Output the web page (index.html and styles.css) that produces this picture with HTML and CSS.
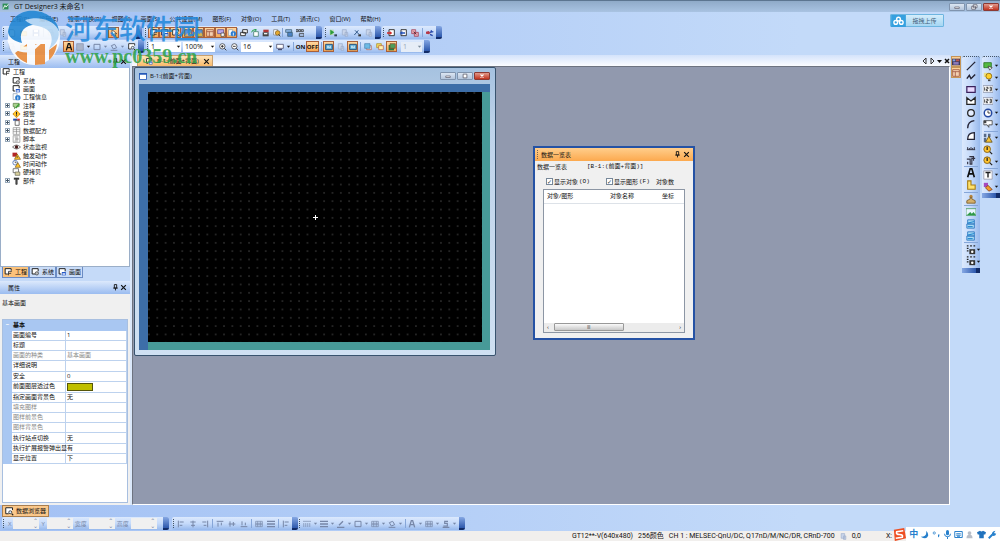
FILE: index.html
```html
<!DOCTYPE html>
<html lang="zh-CN">
<head>
<meta charset="utf-8">
<title>GT Designer3 未命名1</title>
<link rel="stylesheet" href="styles.css">
</head>
<body>
<svg class="defs" aria-hidden="true">
  <symbol id="app" viewBox="0 0 12 12"><path d="M1 1h10v10H1z" fill="#2f8f57"/><path d="M2 10l3-6 2 3 4-5" stroke="#fff" stroke-width="1.5" fill="none"/></symbol>
  <symbol id="arrow" viewBox="0 0 6 6"><path d="M1 2h4L3 4.500z" fill="currentColor"/></symbol>
  <symbol id="close" viewBox="0 0 12 12"><path d="M2 2l8 8M10 2l-8 8" stroke="#111" stroke-width="2"/></symbol>
  <symbol id="pin" viewBox="0 0 12 12"><path d="M4 1h4v6H4zM2 7h8M6 7v4" stroke="#111" stroke-width="1.500" fill="none"/></symbol>
  <symbol id="new" viewBox="0 0 12 12"><path d="M2 1h6l2 2v8H2z" fill="#fff" stroke="#567"/></symbol>
  <symbol id="open" viewBox="0 0 12 12"><path d="M1 3h4l1 1h4v6H1z" fill="#eebf3e" stroke="#a27a1d"/></symbol>
  <symbol id="save" viewBox="0 0 12 12"><path d="M1 1h10v10H1z" fill="#3f6fc0"/><path d="M3 1h6v4H3zM3 7h6v4H3z" fill="#fff"/></symbol>
  <symbol id="cursor" viewBox="0 0 12 12"><path d="M3 1v9l2-2 2 3 1.500-1L7 7h3z" fill="#fff" stroke="#222"/></symbol>
  <symbol id="screen-b" viewBox="0 0 12 12"><path d="M4 9H1V1h9v4" fill="#fff" stroke="#222" stroke-width="1.500"/><path d="M5 6h6v5H5z" fill="#2458c8"/><path d="M6 8h4v2H6z" fill="#fff"/></symbol>
  <symbol id="project" viewBox="0 0 12 12"><path d="M5 9H1V1h9v3" fill="#fff" stroke="#222" stroke-width="1.500"/><path d="M11 5H6v6M6 8h4" fill="none" stroke="#333" stroke-width="1.300"/></symbol>
  <symbol id="system" viewBox="0 0 12 12"><path d="M6 9H1V1h9v4" fill="#fff" stroke="#222" stroke-width="1.500"/><circle cx="8" cy="8" r="2.500" fill="#bbb" stroke="#333"/></symbol>
  <symbol id="find-s" viewBox="0 0 12 12"><path d="M5 9H1V1h9v3" fill="#fff" stroke="#222" stroke-width="1.300"/><circle cx="7" cy="7" r="2" fill="#def" stroke="#222"/><path d="M9 9l2 2" stroke="#222" stroke-width="1.500"/></symbol>
  <symbol id="info" viewBox="0 0 12 12"><path d="M1 1h6v9H1z" fill="#fff" stroke="#89a"/><circle cx="8" cy="7" r="4" fill="#2a7bd0"/><path d="M8 6v4M8 4v1" stroke="#fff" stroke-width="1.300"/></symbol>
  <symbol id="comment" viewBox="0 0 12 12"><path d="M1 2h9v5H6L3 10V7H1z" fill="#a9d18e" stroke="#557a44"/><path d="M5 9l5-6" stroke="#3e9f39" stroke-width="2"/></symbol>
  <symbol id="alarm" viewBox="0 0 12 12"><path d="M6 0l6 6-6 6-6-6z" fill="#c97c10"/><circle cx="6" cy="6" r="4" fill="#ffc42e"/><path d="M6 3v4M6 8v1" stroke="#222" stroke-width="1.500"/></symbol>
  <symbol id="log" viewBox="0 0 12 12"><path d="M1 1h6v3H1z" fill="#234fad"/><path d="M7 1h4v3H7z" fill="#cf3434"/><path d="M4 4h6v7H4z" fill="#fff" stroke="#333"/></symbol>
  <symbol id="recipe" viewBox="0 0 12 12"><path d="M1 1h10v10H1zM6 1v10M1 4h10M1 7h10" fill="#fff" stroke="#888"/></symbol>
  <symbol id="script" viewBox="0 0 12 12"><path d="M1 1h10v10H1z" fill="#fff" stroke="#888"/><path d="M3 3h5M4 5h5M4 7h5M3 9h5" stroke="#777"/></symbol>
  <symbol id="eye" viewBox="0 0 12 12"><path d="M0 6q6-6 12 0-6 6-12 0z" fill="#eee" stroke="#444"/><circle cx="6" cy="6" r="2.500" fill="#4a1a1a"/></symbol>
  <symbol id="trigger" viewBox="0 0 12 12"><path d="M0 1h7v6H0z" fill="#b32626"/><path d="M7 3l5 8H3z" fill="#ffc52d" stroke="#7a5510"/><path d="M7 6v3" stroke="#222"/></symbol>
  <symbol id="time" viewBox="0 0 12 12"><circle cx="4" cy="4" r="3.500" fill="#fff" stroke="#2450a8"/><path d="M4 2v2h2" stroke="#222" fill="none"/><path d="M8 4l4 7H4z" fill="#ffc52d" stroke="#7a5510"/></symbol>
  <symbol id="hardcopy" viewBox="0 0 12 12"><path d="M1 1h8v6H1z" fill="#fff" stroke="#444"/><path d="M4 6h7v5H4z" fill="#d8cf9c" stroke="#665"/></symbol>
  <symbol id="parts" viewBox="0 0 12 12"><path d="M2 1h8v3H2z" fill="#333"/><path d="M5 4h2v7H5z" fill="#666" stroke="#222"/></symbol>
  <symbol id="pic" viewBox="0 0 12 12"><path d="M1 1h10v10H1z" fill="#5a93d8" stroke="#345"/><path d="M1 11l4-5 2 2 2-3 2 3v3z" fill="#d8b24c"/></symbol>
  <symbol id="library" viewBox="0 0 12 12"><path d="M0 1h12v10H0z" fill="#3c3a5c"/><path d="M1 2h4v3H1z" fill="#7fa0e0"/><path d="M6 2h5v3H6z" fill="#c05a50"/><path d="M2 6h8v4H2z" fill="#8a78b8"/></symbol>
  <symbol id="grid" viewBox="0 0 12 12"><path d="M1 1h10v10H1zM1 4h10M5 4v7" fill="#f4d0b0" stroke="#8c3c2c"/></symbol>
  <symbol id="grid-b" viewBox="0 0 12 12"><path d="M1 1h9v6H1z" fill="#b9a8e8" stroke="#4a3d92"/><path d="M6 6h5v5H6z" fill="#fff" stroke="#333"/></symbol>
  <symbol id="cascade" viewBox="0 0 12 12"><path d="M4 1h7v5H4zM1 5h7v5H1z" fill="#fff" stroke="#222" stroke-width="1.300"/></symbol>
  <symbol id="cascade-g" viewBox="0 0 12 12"><path d="M4 4h7v7H4z" fill="#fff" stroke="#2a6d55"/><path d="M1 5q0-4 6-4M5 0l3 1-2 3" stroke="#27a04b" fill="none" stroke-width="1.500"/></symbol>
  <symbol id="stack" viewBox="0 0 12 12"><path d="M2 1h8v4H2z" fill="#b03636"/><path d="M1 5h9v6H1z" fill="#444"/><path d="M3 6h5v2H3z" fill="#eee"/></symbol>
  <symbol id="gold" viewBox="0 0 12 12"><path d="M1 1h6v8H1z" fill="#fff" stroke="#777"/><circle cx="7" cy="6" r="3.500" fill="#e4a931" stroke="#7c581a"/><path d="M8 8l3 3" stroke="#444" stroke-width="1.500"/></symbol>
  <symbol id="dev" viewBox="0 0 12 12"><path d="M1 1h9v4H1z" fill="#8eb8e9" stroke="#356"/><path d="M4 5h7v6H4z" fill="#4c83c6" stroke="#356"/></symbol>
  <symbol id="abc" viewBox="0 0 12 12"><path d="M0 1h3v3H0zM4 1h3v3H4zM8 1h3v3H8zM5 7h7v4H5z" fill="none" stroke="#333" stroke-width="1.200"/></symbol>
  <symbol id="run" viewBox="0 0 12 12"><path d="M1 1h6v8H1z" fill="#b9d7b4"/><path d="M2 1l6 4-6 4z" fill="#2b9b3a"/><path d="M8 8h4v3H8z" fill="#345"/></symbol>
  <symbol id="dim" viewBox="0 0 12 12"><path d="M2 1h6v8H2zM6 5h4v6H6z" fill="#c9d5ea" stroke="#98a9c8"/></symbol>
  <symbol id="tool" viewBox="0 0 12 12"><path d="M2 9l6-7M3 2l6 6" stroke="#345b8c" stroke-width="1.500"/><path d="M8 8h4v3H8z" fill="#333"/></symbol>
  <symbol id="in" viewBox="0 0 12 12"><path d="M3 1h8v9H3z" fill="#fff" stroke="#222" stroke-width="1.300"/><path d="M0 5h4V3l4 3-4 3V7H0z" fill="#d02b2b"/></symbol>
  <symbol id="out" viewBox="0 0 12 12"><path d="M3 1h8v9H3z" fill="#fff" stroke="#222" stroke-width="1.300"/><path d="M1 6l4-3v2h4v2H5v2z" fill="#2653b8"/></symbol>
  <symbol id="verify" viewBox="0 0 12 12"><path d="M1 1h6v6H1zM5 5h6v6H5z" fill="#e7a8b2" stroke="#983248"/><path d="M4 4l4 4" stroke="#222"/></symbol>
  <symbol id="comm" viewBox="0 0 12 12"><path d="M0 4l4-1 3 3-3 2-4-1z" fill="#b43848"/><path d="M6 5l5-1M6 8l4 2M8 2v3" stroke="#2848a8" stroke-width="2"/></symbol>
  <symbol id="font" viewBox="0 0 12 12"><path d="M2 11L5 1h2l3 10M4 7h4" stroke="currentColor" stroke-width="2" fill="none"/></symbol>
  <symbol id="fill" viewBox="0 0 12 12"><path d="M1 1h10v10H1z" fill="#a9b4c8" stroke="#8793ad"/></symbol>
  <symbol id="rect" viewBox="0 0 12 12"><path d="M1.500 2h9v8h-9z" fill="none" stroke="currentColor" stroke-width="1.500"/></symbol>
  <symbol id="bucket" viewBox="0 0 12 12"><path d="M2 4l5-2 3 5-5 2zM1 11h10" stroke="currentColor" stroke-width="1.500" fill="none"/></symbol>
  <symbol id="zoom-in" viewBox="0 0 12 12"><circle cx="5" cy="5" r="4" fill="#fff" stroke="#222"/><path d="M3 5h4M5 3v4M8 8l3 3" stroke="#222" stroke-width="1.300"/></symbol>
  <symbol id="zoom-out" viewBox="0 0 12 12"><circle cx="5" cy="5" r="4" fill="#fff" stroke="#222"/><path d="M3 5h4M8 8l3 3" stroke="#222" stroke-width="1.300"/></symbol>
  <symbol id="monitor" viewBox="0 0 12 12"><path d="M1 2h10v6H1z" fill="#fff" stroke="#335"/><path d="M3 10h6" stroke="#335" stroke-width="1.500"/></symbol>
  <symbol id="dev-b" viewBox="0 0 12 12"><path d="M1 2h10v8H1z" fill="#61b1d8" stroke="#26527e" stroke-width="1.500"/><path d="M3 5h3M7 5h2M3 7h6" stroke="#fff"/></symbol>
  <symbol id="front" viewBox="0 0 12 12"><path d="M4 4h7v6H4z" fill="#eee" stroke="#b45a48"/><path d="M1 1h8v7H1z" fill="#6ebbe5" stroke="#4580b0"/></symbol>
  <symbol id="back" viewBox="0 0 12 12"><path d="M1 1h7v6H1z" fill="#f3df5c" stroke="#a88420"/><path d="M4 4h7v6H4z" fill="#fff4b0" stroke="#b45a48"/></symbol>
  <symbol id="both" viewBox="0 0 12 12"><path d="M1 3h8v8H1z" fill="#267a48"/><path d="M3 1h8v7H3z" fill="#4d9f5a" stroke="#8a4a28"/></symbol>
  <symbol id="line" viewBox="0 0 12 12"><path d="M1 11L11 1" stroke="#223" stroke-width="1.500"/></symbol>
  <symbol id="poly" viewBox="0 0 12 12"><path d="M1 8l3-4 2 4 5-5" stroke="#223" stroke-width="1.700" fill="none"/></symbol>
  <symbol id="rect-v" viewBox="0 0 12 12"><path d="M1 3h10v7H1z" fill="#e9d9ff" stroke="#39215d" stroke-width="1.500"/></symbol>
  <symbol id="polygon" viewBox="0 0 12 12"><path d="M1 2l5 4 5-4v8H1z" fill="#fff" stroke="#222" stroke-width="1.500"/></symbol>
  <symbol id="circle" viewBox="0 0 12 12"><circle cx="6" cy="6" r="4" fill="#e4edff" stroke="#222" stroke-width="1.500"/></symbol>
  <symbol id="arc" viewBox="0 0 12 12"><path d="M2 11q0-8 8-9" fill="none" stroke="#223" stroke-width="1.600"/></symbol>
  <symbol id="sector" viewBox="0 0 12 12"><path d="M2 10q0-8 8-8v8z" fill="#fff" stroke="#223" stroke-width="1.500"/></symbol>
  <symbol id="scale" viewBox="0 0 12 12"><path d="M1 8h10M2 5v3M4 6v2M6 5v3M8 6v2M10 5v3" stroke="#334" stroke-width="1.200"/></symbol>
  <symbol id="pipe" viewBox="0 0 12 12"><path d="M1 5h4v6h2V4h4M4 2h5v5M2 8v3" fill="none" stroke="#334" stroke-width="1.400"/></symbol>
  <symbol id="logo-text" viewBox="0 0 12 12"><path d="M2 1h4v5h5v5H2z" fill="#ffe26a" stroke="#a67b12" stroke-width="1.300"/></symbol>
  <symbol id="stamp" viewBox="0 0 12 12"><circle cx="6" cy="3" r="2" fill="#b8863f"/><path d="M5 4h2v2l4 2v3H1V8l4-2z" fill="#d5b06b" stroke="#7a5a28"/></symbol>
  <symbol id="photo" viewBox="0 0 12 12"><path d="M0 2h12v8H0z" fill="#e8f4ff" stroke="#4b9c62"/><path d="M1 10l4-4 2 2 2-2 3 4z" fill="#2f9a48"/></symbol>
  <symbol id="paint" viewBox="0 0 12 12"><path d="M2 1h8v5H2zM1 6h9v5H1z" fill="#a9dcf6" stroke="#2b74bd"/><path d="M2 5l8-2M2 9h6" stroke="#2b8bd0" stroke-width="1.500"/></symbol>
  <symbol id="cam" viewBox="0 0 12 12"><path d="M1 1h2M5 1h2M9 1h2M1 4h2M1 7h2" stroke="#222" stroke-width="1.500"/><path d="M4 5h7v6H4z" fill="#333"/><circle cx="7.500" cy="8" r="1.500" fill="#fff"/></symbol>
  <symbol id="switch" viewBox="0 0 12 12"><path d="M1 2h9v6H1z" fill="#55bb42" stroke="#2b7624"/><path d="M6 6l5 2-3 3z" fill="#fff" stroke="#444"/></symbol>
  <symbol id="lamp" viewBox="0 0 12 12"><path d="M1 1h4v5H1z" fill="#ece084"/><circle cx="7" cy="5" r="3.500" fill="#ffd02b" stroke="#8a6a10"/><path d="M6 9h3v2H6z" fill="#444"/></symbol>
  <symbol id="num" viewBox="0 0 12 12"><path d="M0 2h12v8H0z" fill="#fff" stroke="#8a93a8"/><path d="M2 4v4M4 4h2v2H4v2h2M8 4h2v4H8M8 6h2" fill="none" stroke="#222"/></symbol>
  <symbol id="clock" viewBox="0 0 12 12"><circle cx="6" cy="6" r="4.500" fill="#fff" stroke="#2448a0" stroke-width="1.700"/><path d="M6 3v3h3" fill="none" stroke="#222"/></symbol>
  <symbol id="balloon" viewBox="0 0 12 12"><path d="M1 2h10v5H7v3L5 7H1z" fill="#fff" stroke="#444"/><path d="M1 2h3v3H1z" fill="#444"/></symbol>
  <symbol id="users" viewBox="0 0 12 12"><path d="M1 1h3v4H1zM6 1h3v4H6zM1 6h3v5H1z" fill="#586b88"/><path d="M7 4l4 7H3z" fill="#f7c437" stroke="#655018"/></symbol>
  <symbol id="alarm-f" viewBox="0 0 12 12"><circle cx="5" cy="5" r="4" fill="#ffc42e" stroke="#7c5a14"/><path d="M5 2v4M8 8l3 3" stroke="#222" stroke-width="1.500"/></symbol>
  <symbol id="text" viewBox="0 0 12 12"><path d="M1 1h10v10H1z" fill="#fff" stroke="#99a"/><path d="M3 3h6M6 3v6" stroke="#222" stroke-width="1.700"/></symbol>
  <symbol id="parts-c" viewBox="0 0 12 12"><path d="M1 1h5v5H1z" fill="#a54bc0"/><path d="M6 4l5 5-4 2-4-4z" fill="#f29c2d" stroke="#803a18"/></symbol>
  <symbol id="al-l" viewBox="0 0 12 12"><path d="M2 1v10M4 3h6M4 8h4" stroke="currentColor" stroke-width="1.500"/></symbol>
  <symbol id="al-c" viewBox="0 0 12 12"><path d="M6 1v10M2 3h8M3 8h6" stroke="currentColor" stroke-width="1.500"/></symbol>
  <symbol id="al-r" viewBox="0 0 12 12"><path d="M10 1v10M2 3h6M4 8h4" stroke="currentColor" stroke-width="1.500"/></symbol>
  <symbol id="al-t" viewBox="0 0 12 12"><path d="M1 2h10M3 4v6M8 4v4" stroke="currentColor" stroke-width="1.500"/></symbol>
  <symbol id="al-m" viewBox="0 0 12 12"><path d="M1 6h10M3 2v8M8 3v6" stroke="currentColor" stroke-width="1.500"/></symbol>
  <symbol id="al-b" viewBox="0 0 12 12"><path d="M1 10h10M3 2v6M8 4v4" stroke="currentColor" stroke-width="1.500"/></symbol>
  <symbol id="bars" viewBox="0 0 12 12"><path d="M0 2h12M0 6h12M0 10h12" stroke="currentColor" stroke-width="2"/></symbol>
  <symbol id="dash" viewBox="0 0 12 12"><path d="M0 2h12" stroke="currentColor"/><path d="M0 6h12M0 9h12" stroke="currentColor" stroke-dasharray="2 1" stroke-width="1.500"/></symbol>
  <symbol id="pen" viewBox="0 0 12 12"><path d="M3 8l6-6M0 11h11" stroke="currentColor" stroke-width="2"/></symbol>
  <symbol id="hatch" viewBox="0 0 12 12"><path d="M1 2h10v8H1zM1 5h10M1 7h10M4 2v8M8 2v8" fill="none" stroke="currentColor"/></symbol>
  <symbol id="shadow" viewBox="0 0 12 12"><path d="M9 2H4v3h4v4H2M1 11h10" fill="none" stroke="currentColor" stroke-width="1.700"/></symbol>
  <symbol id="min" viewBox="0 0 12 8"><path d="M3 4h6v2H3z" fill="#fff" stroke="#667"/></symbol>
  <symbol id="max" viewBox="0 0 12 8"><path d="M3.500 1.500h5v5h-5z" fill="#fff" stroke="#556"/></symbol>
  <symbol id="restore" viewBox="0 0 12 8"><path d="M5 1h5v4H5zM3 3h5v4H3z" fill="#fff" stroke="#556"/></symbol>
  <symbol id="x" viewBox="0 0 12 8"><path d="M4 2l4 4M8 2L4 6" stroke="#fff" stroke-width="1.500"/></symbol>
</svg>

<header class="titlebar">
  <svg class="ic"><use href="#app"/></svg><h1>GT Designer3 未命名1</h1>
  <div class="winbtns"><button aria-label="最小化"><svg><use href="#min"/></svg></button><button aria-label="还原"><svg><use href="#restore"/></svg></button><button class="red" aria-label="关闭"><svg><use href="#x"/></svg></button></div>
</header>

<section class="top">
  <nav class="menu">
    <button>工程(P)</button><button>编辑(E)</button><button>搜索/替换(R)</button><button>视图(V)</button><button>画面(S)</button><button>公共设置(M)</button><button>图形(F)</button><button>对象(O)</button><button>工具(T)</button><button>通讯(C)</button><button>窗口(W)</button><button>帮助(H)</button>
  </nav>
  <div class="bars">
    <div class="bar w-a">
      <button class="b" aria-label="新建"><svg><use href="#new"/></svg></button><button class="b" aria-label="打开"><svg><use href="#open"/></svg></button><button class="b" aria-label="保存"><svg><use href="#save"/></svg></button><i class="sep"></i><button class="b" aria-label="剪切"><svg><use href="#dim"/></svg></button><button class="b" aria-label="复制"><svg><use href="#dim"/></svg></button><button class="b" aria-label="粘贴"><svg><use href="#dim"/></svg></button><span class="grow"></span><button class="b on" aria-label="选择"><svg><use href="#cursor"/></svg></button><span class="gap"></span><i class="cap"></i>
    </div>
    <div class="bar w-b">
      <button class="b on" aria-label="新建画面"><svg><use href="#project"/></svg></button><button class="b on" aria-label="打开画面"><svg><use href="#screen-b"/></svg></button><button class="b on" aria-label="画面属性"><svg><use href="#find-s"/></svg></button><i class="sep"></i><button class="b on" aria-label="图像"><svg><use href="#pic"/></svg></button><button class="b on" aria-label="预览"><svg><use href="#pic"/></svg></button><button class="b on" aria-label="列表"><svg><use href="#grid"/></svg></button><button class="b on" aria-label="数据"><svg><use href="#grid-b"/></svg></button><button class="b on" aria-label="浏览"><svg><use href="#info"/></svg></button><i class="sep"></i><button class="b" aria-label="层叠"><svg><use href="#cascade"/></svg></button><button class="b" aria-label="更新"><svg><use href="#cascade-g"/></svg></button><button class="b" aria-label="图层"><svg><use href="#stack"/></svg></button><button class="b" aria-label="搜索"><svg><use href="#gold"/></svg></button><i class="sep"></i><button class="b" aria-label="软元件"><svg><use href="#dev"/></svg></button><button class="b" aria-label="字符"><svg><use href="#abc"/></svg></button><i class="cap"></i>
    </div>
    <div class="bar w-c">
      <button class="b" aria-label="启动"><svg><use href="#run"/></svg></button><button class="b" aria-label="停止" disabled><svg><use href="#dim"/></svg></button><button class="b" aria-label="设置"><svg><use href="#tool"/></svg></button><button class="b" aria-label="其他" disabled><svg><use href="#dim"/></svg></button><i class="cap"></i>
    </div>
    <div class="bar w-d">
      <button class="b" aria-label="写入"><svg><use href="#in"/></svg></button><button class="b" aria-label="读取"><svg><use href="#out"/></svg></button><button class="b" aria-label="校验"><svg><use href="#verify"/></svg></button><i class="sep"></i><button class="b" aria-label="通讯设置"><svg><use href="#comm"/></svg></button><i class="cap"></i>
    </div>
  </div>
  <div class="bars">
    <div class="bar w-e">
      <button class="b" aria-label="撤销"><svg><use href="#dim"/></svg></button><button class="b" aria-label="文件夹"><svg><use href="#open"/></svg></button><span class="grow"></span><button class="b on" aria-label="字体"><svg><use href="#font"/></svg></button><button class="b drop" aria-label="填充"><svg><use href="#fill"/></svg><svg class="ar"><use href="#arrow"/></svg></button><button class="b drop grey" aria-label="边框"><svg><use href="#rect"/></svg><svg class="ar"><use href="#arrow"/></svg></button><button class="b drop grey" aria-label="颜色"><svg><use href="#bucket"/></svg><svg class="ar"><use href="#arrow"/></svg></button><button class="b" aria-label="查找"><svg><use href="#find-s"/></svg></button><i class="cap"></i>
    </div>
    <div class="bar w-f">
      <label class="sel"><select aria-label="画面编号"><option>1</option></select><svg class="ar"><use href="#arrow"/></svg></label>
      <label class="sel"><select aria-label="缩放"><option>100%</option></select><svg class="ar"><use href="#arrow"/></svg></label>
      <button class="b" aria-label="放大"><svg><use href="#zoom-in"/></svg></button><button class="b" aria-label="缩小"><svg><use href="#zoom-out"/></svg></button>
      <label class="sel"><select aria-label="网格间距"><option>16</option></select><svg class="ar"><use href="#arrow"/></svg></label>
      <button class="b drop" aria-label="网格"><svg><use href="#monitor"/></svg><svg class="ar"><use href="#arrow"/></svg></button><span class="grow"></span><i class="sep"></i><button class="b word">ON</button><button class="b word on">OFF</button><i class="sep"></i><button class="b on" aria-label="软元件显示"><svg><use href="#dev-b"/></svg></button><button class="b" aria-label="编号显示"><svg><use href="#dim"/></svg></button><button class="b on" aria-label="ID显示"><svg><use href="#dev-b"/></svg></button><i class="sep"></i><button class="b" aria-label="前面"><svg><use href="#front"/></svg></button><button class="b" aria-label="背面"><svg><use href="#back"/></svg></button><button class="b on" aria-label="前面+背面"><svg><use href="#both"/></svg></button>
      <label class="sel off"><select aria-label="图层" disabled><option>1</option></select><svg class="ar"><use href="#arrow"/></svg></label>
      <i class="cap"></i>
    </div>
  </div>
  <button class="upload"><svg viewBox="0 0 16 13"><path d="M0 0h16v13H0z" fill="#35a0df"/><g fill="none" stroke="#fff" stroke-width="1.500"><circle cx="8" cy="4.500" r="2"/><circle cx="5" cy="8" r="2"/><circle cx="11" cy="8" r="2"/></g></svg><span>拖拽上传</span></button>
  <div class="mark" aria-hidden="true">
    <svg viewBox="0 0 56 58"><ellipse cx="28" cy="30" rx="26" ry="27" fill="#fff"/><path d="M2 24C4 8 18 1 30 3c12 1 22 10 23 20-9-6-17-9-27-6-10 2-13 9-10 18-8-2-13-5-14-11z" fill="#2186d2"/><path d="M19 12c13-4 27-1 33 9 3 8-2 16-9 20 5-9 3-18-5-21-7-3-13-2-19-8z" fill="#b8d9f4"/><path d="M9 45l12-9v19c-5-2-9-5-12-10zM29 36h10v20l-10 1zM43 42l8-6c-1 7-4 13-8 16z" fill="#ee8b35"/><path d="M1 31c8 9 23 10 37 2L26 44C13 46 3 40 1 31z" fill="#fff"/></svg>
    <div><p class="cn">河东软件园</p><p class="url">www.pc0359.cn</p></div>
  </div>
</section>

<main class="main">
  <aside class="left">
    <header class="phead"><h2>工程</h2><svg class="ic"><use href="#pin"/></svg><svg class="ic"><use href="#close"/></svg></header>
    <ul class="tree">
      <li class="root"><svg><use href="#project"/></svg>工程</li>
      <li><i></i><svg><use href="#system"/></svg>系统</li>
      <li><i></i><svg><use href="#screen-b"/></svg>画面</li>
      <li><i></i><svg><use href="#info"/></svg>工程信息</li>
      <li><i class="plus"></i><svg><use href="#comment"/></svg>注释</li>
      <li><i class="plus"></i><svg><use href="#alarm"/></svg>报警</li>
      <li><i class="plus"></i><svg><use href="#log"/></svg>日志</li>
      <li><i class="plus"></i><svg><use href="#recipe"/></svg>数据配方</li>
      <li><i class="plus"></i><svg><use href="#script"/></svg>脚本</li>
      <li><i></i><svg><use href="#eye"/></svg>状态监视</li>
      <li><i></i><svg><use href="#trigger"/></svg>触发动作</li>
      <li><i></i><svg><use href="#time"/></svg>时间动作</li>
      <li><i></i><svg><use href="#hardcopy"/></svg>硬拷贝</li>
      <li><i class="plus"></i><svg><use href="#parts"/></svg>部件</li>
    </ul>
    <div class="ltabs"><button class="on"><svg><use href="#project"/></svg>工程</button><button><svg><use href="#system"/></svg>系统</button><button><svg><use href="#screen-b"/></svg>画面</button></div>
    <header class="phead"><h2>属性</h2><svg class="ic"><use href="#pin"/></svg><svg class="ic"><use href="#close"/></svg></header>
    <div class="props">
      <p>基本画面</p>
      <div class="sheet">
      <table>
        <colgroup><col class="c-g"><col><col class="c-v"></colgroup>
        <tr class="grp"><th class="g">−</th><th colspan="2">基本</th></tr>
        <tr><td class="g"></td><th>画面编号</th><td>1</td></tr>
        <tr><td class="g"></td><th>标题</th><td></td></tr>
        <tr class="dis"><td class="g"></td><th>画面的种类</th><td>基本画面</td></tr>
        <tr><td class="g"></td><th>详细说明</th><td></td></tr>
        <tr><td class="g"></td><th>安全</th><td>0</td></tr>
        <tr><td class="g"></td><th>前面图层透过色</th><td><span class="swatch"></span></td></tr>
        <tr><td class="g"></td><th>指定画面背景色</th><td>无</td></tr>
        <tr class="dis"><td class="g"></td><th>填充图样</th><td></td></tr>
        <tr class="dis"><td class="g"></td><th>图样前景色</th><td></td></tr>
        <tr class="dis"><td class="g"></td><th>图样背景色</th><td></td></tr>
        <tr><td class="g"></td><th>执行站点切换</th><td>无</td></tr>
        <tr><td class="g"></td><th>执行扩展报警弹出显</th><td>有</td></tr>
        <tr><td class="g"></td><th>显示位置</th><td>下</td></tr>
      </table>
      </div>
    </div>
  </aside>

  <section class="center">
    <div class="dtabs"><button class="dtab"><svg class="ic"><use href="#screen-b"/></svg>B-1:(前面+背面)<svg class="ic"><use href="#close"/></svg></button><span class="grow"></span>
      <svg class="nav" viewBox="0 0 28 8"><path d="M4 1v6L1 4zM9 1v6l3-3z" fill="none" stroke="#333"/><path d="M15 3h5l-2.500 3z" fill="#111"/><path d="M23 2l4 4M27 2l-4 4" stroke="#111" stroke-width="1.500"/></svg></div>
    <div class="desk">
      <section class="doc">
        <header><svg viewBox="0 0 9 8"><path d="M.500.500h8v7h-8z" fill="#fff" stroke="#2458b8"/><path d="M0 0h9v2H0z" fill="#2458b8"/></svg><h2>B-1:(前面+背面)</h2>
          <div class="winbtns"><button aria-label="最小化"><svg><use href="#min"/></svg></button><button aria-label="最大化"><svg><use href="#max"/></svg></button><button class="red" aria-label="关闭"><svg><use href="#x"/></svg></button></div></header>
        <div class="blue"><div class="teal"><div class="canvas"><svg viewBox="0 0 7 7"><path d="M3.500 1v5M1 3.500h5" stroke="#fff"/></svg></div></div></div>
      </section>
      <section class="float">
        <header><i class="grip"></i><h2>数据一览表</h2><svg class="ic"><use href="#pin"/></svg><svg class="ic"><use href="#close"/></svg></header>
        <div class="fbody">
          <div class="frow"><span>数据一览表</span><span class="mono">[B-1:(前面+背面)]</span></div>
          <div class="fchecks"><label><input type="checkbox" checked>显示对象<span class="mono">(O)</span></label><label><input type="checkbox" checked>显示图形<span class="mono">(F)</span></label><span>对象数</span></div>
          <div class="list">
            <table><tr><th>对象/图形</th><th>对象名称</th><th>坐标</th></tr></table>
            <div class="scroll"><span>‹</span><div class="track"><i>|||</i></div><span>›</span></div>
          </div>
        </div>
      </section>
    </div>
  </section>

  <aside class="right">
    <div class="vtabs"><button aria-label="库"><svg><use href="#library"/></svg></button><button aria-label="列表"><svg><use href="#grid"/></svg></button></div>
    <div class="vbar v1">
      <button aria-label="直线"><svg><use href="#line"/></svg></button><button aria-label="折线"><svg><use href="#poly"/></svg></button><button aria-label="矩形"><svg><use href="#rect-v"/></svg></button><button aria-label="多边形"><svg><use href="#polygon"/></svg></button><button aria-label="圆"><svg><use href="#circle"/></svg></button><button aria-label="圆弧"><svg><use href="#arc"/></svg></button><button aria-label="扇形"><svg><use href="#sector"/></svg></button><button aria-label="刻度"><svg><use href="#scale"/></svg></button><button aria-label="配管"><svg><use href="#pipe"/></svg></button><i></i><button aria-label="文本"><svg><use href="#font"/></svg></button><button aria-label="艺术字"><svg><use href="#logo-text"/></svg></button><i></i><button aria-label="印章"><svg><use href="#stamp"/></svg></button><i></i><button aria-label="图片"><svg><use href="#photo"/></svg></button><button aria-label="导入"><svg><use href="#paint"/></svg></button><button aria-label="导出"><svg><use href="#paint"/></svg></button><i></i><button aria-label="捕捉"><svg><use href="#cam"/></svg><svg class="ar"><use href="#arrow"/></svg></button><button aria-label="捕捉区域"><svg><use href="#cam"/></svg><svg class="ar"><use href="#arrow"/></svg></button><b></b>
    </div>
    <div class="vbar v2">
      <button aria-label="开关"><svg><use href="#switch"/></svg><svg class="ar"><use href="#arrow"/></svg></button><button aria-label="指示灯"><svg><use href="#lamp"/></svg><svg class="ar"><use href="#arrow"/></svg></button><button aria-label="数值"><svg><use href="#num"/></svg><svg class="ar"><use href="#arrow"/></svg></button><button aria-label="字符"><svg><use href="#num"/></svg><svg class="ar"><use href="#arrow"/></svg></button><button aria-label="时钟"><svg><use href="#clock"/></svg><svg class="ar"><use href="#arrow"/></svg></button><button aria-label="注释"><svg><use href="#balloon"/></svg><svg class="ar"><use href="#arrow"/></svg></button><i></i><button aria-label="用户报警"><svg><use href="#users"/></svg><svg class="ar"><use href="#arrow"/></svg></button><button aria-label="系统报警"><svg><use href="#alarm-f"/></svg></button><button aria-label="报警显示"><svg><use href="#alarm-f"/></svg><svg class="ar"><use href="#arrow"/></svg></button><i></i><button aria-label="文本输入"><svg><use href="#text"/></svg><svg class="ar"><use href="#arrow"/></svg></button><button aria-label="部件显示"><svg><use href="#parts-c"/></svg><svg class="ar"><use href="#arrow"/></svg></button><b></b>
    </div>
  </aside>
</main>

<section class="bottom">
  <button class="browser"><svg><use href="#find-s"/></svg>数据浏览器</button>
  <div class="bars grey">
    <div class="bar w-g">
      <label>X<input disabled><span class="spin">⌃⌄</span></label><label>Y<input disabled><span class="spin">⌃⌄</span></label><label>宽度<input disabled><span class="spin">⌃⌄</span></label><label>高度<input disabled><span class="spin">⌃⌄</span></label><i class="cap"></i>
    </div>
    <div class="bar w-h">
      <button class="b" aria-label="左对齐"><svg><use href="#al-l"/></svg></button><button class="b" aria-label="水平居中"><svg><use href="#al-c"/></svg></button><button class="b" aria-label="右对齐"><svg><use href="#al-r"/></svg></button><i class="sep"></i><button class="b" aria-label="上对齐"><svg><use href="#al-t"/></svg></button><button class="b" aria-label="垂直居中"><svg><use href="#al-m"/></svg></button><button class="b" aria-label="下对齐"><svg><use href="#al-b"/></svg></button><i class="sep"></i><button class="b" aria-label="横向均布"><svg><use href="#hatch"/></svg></button><button class="b" aria-label="纵向均布"><svg><use href="#bars"/></svg></button><i class="sep"></i><button class="b" aria-label="对齐网格"><svg><use href="#al-l"/></svg></button><i class="cap"></i>
    </div>
    <div class="bar w-i">
      <button class="b drop" aria-label="线型"><svg><use href="#dash"/></svg><svg class="ar"><use href="#arrow"/></svg></button><button class="b drop" aria-label="线宽"><svg><use href="#bars"/></svg><svg class="ar"><use href="#arrow"/></svg></button><button class="b drop" aria-label="线色"><svg><use href="#pen"/></svg><svg class="ar"><use href="#arrow"/></svg></button><button class="b drop" aria-label="外框"><svg><use href="#rect"/></svg><svg class="ar"><use href="#arrow"/></svg></button><button class="b drop" aria-label="图样"><svg><use href="#hatch"/></svg><svg class="ar"><use href="#arrow"/></svg></button><button class="b drop" aria-label="背景色"><svg><use href="#bucket"/></svg><svg class="ar"><use href="#arrow"/></svg></button><i class="sep"></i><button class="b drop" aria-label="文字色"><svg><use href="#font"/></svg><svg class="ar"><use href="#arrow"/></svg></button><button class="b drop" aria-label="文字样式"><svg><use href="#hatch"/></svg><svg class="ar"><use href="#arrow"/></svg></button><button class="b drop" aria-label="阴影"><svg><use href="#shadow"/></svg><svg class="ar"><use href="#arrow"/></svg></button><i class="cap"></i>
    </div>
  </div>
</section>

<footer class="status">
  <span>GT12**-V(640x480)</span><span>256颜色</span><span>CH 1 : MELSEC-QnU/DC, Q17nD/M/NC/DR, CRnD-700</span><svg class="ic"><use href="#dim"/></svg><span class="pos">0,0</span><span>X:</span>
  <div class="ime">
    <svg class="s" viewBox="0 0 16 16"><path d="M2 3l11-2 2 11-12 3z" fill="#ee4f23"/><path d="M12 4L5 5q-1 3 3 3 4 0 3 3l-7 1" fill="none" stroke="#fff" stroke-width="1.800"/></svg>
    <span>中</span>
    <svg viewBox="0 0 12 12"><path d="M8 1q2 8-7 8 8 5 10-2 0-4-3-6z" fill="#2780cc"/></svg>
    <svg viewBox="0 0 12 12"><circle cx="3" cy="4" r="1.500" fill="none" stroke="#2780cc"/><path d="M8 6h2q0 3-2 4z" fill="#2780cc"/></svg>
    <svg viewBox="0 0 12 12"><rect x="4" width="4" height="7" rx="2" fill="#2780cc"/><path d="M2 5q0 4 4 4t4-4M6 9v3" fill="none" stroke="#2780cc" stroke-width="1.300"/></svg>
    <svg viewBox="0 0 12 12"><path d="M1 2h10v8H1zM3 5h6M3 7h6M4 9h4" fill="none" stroke="#2780cc" stroke-width="1.300"/></svg>
    <svg viewBox="0 0 12 12"><circle cx="6" cy="4" r="2.500" fill="#b8bec8"/><path d="M2 11q0-5 4-5t4 5z" fill="#b8bec8"/></svg>
    <svg viewBox="0 0 12 12"><path d="M4 1q2 2 4 0l4 2-1 3H9v5H3V6H1L0 3z" fill="#2072bd"/></svg>
    <svg viewBox="0 0 12 12"><path d="M1 11l5-5" stroke="#2780cc" stroke-width="2.500"/><path d="M10 1L8 4l3 1q-1 3-4 3-3-2-1-5 1-2 4-2z" fill="#2780cc"/></svg>
  </div>
</footer>
</body>
</html>
```

FILE: styles.css
```css
* { box-sizing: border-box; }
body {
  margin: 0; height: 100vh; display: flex; flex-direction: column; overflow: hidden;
  font: 6px/8px "Open Sans", "Noto Sans CJK SC", sans-serif; color: #111;
  background: linear-gradient(90deg, #a3c1f4, #c3daf9 80%);
}
h1, h2, p, ul { margin: 0; padding: 0; font: inherit; list-style: none; }
button, input, select { font: inherit; color: inherit; margin: 0; padding: 0; border: 0; background: none; }
svg { display: block; flex: none; }
.defs { position: absolute; width: 0; height: 0; }
.ic { width: 7px; height: 7px; }
.ar { width: 5px; height: 5px; }
.grow { flex: 1; }
.gap { width: 16px; }
.mono { font-family: "Liberation Mono", "Noto Sans CJK SC", monospace; }

.titlebar {
  height: 12px; padding: 0 1px 0 2px; display: flex; align-items: center; gap: 5px;
  border-top: 1px solid #5c7590; background: linear-gradient(#8faac8, #a9c3e2);
}
.titlebar h1 { flex: 1; font-size: 7px; }
.winbtns { display: flex; gap: 1px; }
.winbtns button { width: 16px; height: 8px; border: 1px solid #8094ae; border-radius: 1px; background: linear-gradient(#dce6f2, #b3c5dc); display: grid; place-items: center; }
.winbtns svg { width: 10px; height: 6px; }
.winbtns .red { background: linear-gradient(#e29a8c, #c1331f); border-color: #8c3a34; }

.top { position: relative; height: 43px; }
.menu { height: 14px; padding-left: 10px; display: flex; align-items: center; gap: 10px; }
.bars { display: flex; gap: 2px; padding-left: 2px; height: 14px; }
.bar {
  display: flex; align-items: center; padding-left: 5px; height: 13px; flex: none;
  background: linear-gradient(#dce9fd, #c5dafa 50%, #96b8ec); border-radius: 2px;
}
.bar::before { content: ""; width: 1px; height: 9px; margin: 0 1px 0 -4px; border-left: 1px dotted #456; }
.w-a { width: 140px; } .w-b { width: 178px; } .w-c { width: 56px; } .w-d { width: 59px; }
.w-e { width: 142px; } .w-f { width: 284px; } .w-g { width: 167px; } .w-h { width: 123px; } .w-i { width: 167px; }
.b { width: 12px; height: 12px; display: flex; align-items: center; justify-content: center; flex: none; }
.b svg { width: 8px; height: 8px; }
.b .ar { width: 5px; height: 5px; }
.b.drop { width: 17px; gap: 2px; }
.b.on { width: 11px; margin-right: 1px; height: 11px; border: 1px solid #a8603a; background: linear-gradient(#ffd7a0, #f7a652); }
.b.word { font-size: 6px; font-weight: 700; width: 11px; }
.b.word.on { width: 13px; }
.sep { width: 1px; height: 9px; margin: 0 1px; background: #86a6d8; flex: none; }
.w-b .b { width: 11px; margin: 0; }
.w-b .sep { margin: 0; }
.cap { width: 6px; height: 13px; margin-left: auto; background: linear-gradient(#86a8e4, #2c57ab); border-radius: 0 2px 2px 0; flex: none; border-bottom: 2px solid #122c68; }
.grey { color: #7787a8; }
.sel { display: flex; align-items: center; background: #fff; width: 32px; height: 10px; margin-right: 2px; flex: none; }
.sel select { appearance: none; flex: 1; min-width: 0; padding-left: 2px; font-size: 7px; }
.sel.off { width: 21px; margin-left: 3px; background: #e6edf7; color: #789; }
.upload {
  position: absolute; right: 56px; top: 2px; width: 54px; height: 13px; display: flex; align-items: center;
  border: 1px solid #6db5e0; background: linear-gradient(#d4edfb, #a5d6f3); color: #46627c; border-radius: 1px;
}
.upload svg { width: 15px; height: 12px; }
.upload span { flex: 1; }
.mark { position: absolute; left: 6px; top: -4px; display: flex; gap: 3px; z-index: 3; pointer-events: none; opacity: 0.88; }
.mark svg { width: 56px; height: 58px; }
.mark .cn { font: 500 27px/32px "Noto Sans CJK SC", sans-serif; color: #2589dc; margin-top: 4px; }
.mark .url { font: bold 20px/24px "Liberation Serif", serif; color: #31a34a; }

.main { flex: 1; min-height: 0; display: grid; grid-template-columns: 132px 1fr 50px; }
.left { display: flex; flex-direction: column; min-height: 0; padding-right: 2px; background: #dbe8fa; }
.phead { height: 13px; padding: 0 3px 0 8px; display: flex; align-items: center; gap: 1px; background: linear-gradient(#dce9fc, #9bbcf0); }
.phead h2 { flex: 1; }
.tree {
  flex: 1; display: grid; grid-template-rows: repeat(14, 1fr); align-items: center;
  padding-bottom: 81px; background: #fff; border: 1px solid #9aaec8; border-top: 0;
}
.tree li { height: 8px; display: flex; align-items: center; gap: 2px; padding-left: 4px; }
.tree svg { width: 9px; height: 8px; }
.tree .root { padding-left: 1px; }
.tree i { width: 5px; height: 5px; }
.tree .plus { border: 1px solid #9ab; background: linear-gradient(#456, #456) center / 3px 1px no-repeat, linear-gradient(#456, #456) center / 1px 3px no-repeat; }
.ltabs { height: 14px; display: flex; padding-left: 2px; background: #c5daf8; align-items: flex-start; }
.ltabs button { display: flex; align-items: center; gap: 2px; height: 11px; width: 27px; padding: 0 1px; border: 1px solid #6c8cc4; border-top: 0; background: #c9dcf8; }
.ltabs .on { background: #fcc27a; }
.ltabs svg { width: 9px; height: 8px; }
.props { background: #f0f0f0; height: 211px; padding: 5px 2px 2px; display: flex; flex-direction: column; }
.props p { height: 20px; }
.sheet { flex: 1; background: #fff; border: 1px solid #a8bfe0; }
.sheet table { width: 100%; height: 144px; border-collapse: collapse; table-layout: fixed; }
.c-g { width: 8px; }
.c-v { width: 61px; }
.sheet th, .sheet td { padding: 0 0 0 1px; font-weight: 400; text-align: left; border: 1px solid #bdd2ee; white-space: nowrap; line-height: 7px; }
.sheet .g { background: #a9c7f2; border-color: #a9c7f2; padding: 0; color: #fff; }
.sheet .grp th { background: #a9c7f2; font-weight: 700; border-color: #a9c7f2; }
.sheet .grp .g { color: #fff; text-align: center; }
.sheet .dis td, .sheet .dis th { color: #888; }
.swatch { display: block; width: 26px; height: 8px; background: #bfbf00; border: 1px solid #55550a; }

.center { display: flex; flex-direction: column; min-width: 0; }
.dtabs { height: 11px; display: flex; align-items: center; padding-left: 5px; background: linear-gradient(#d4e3fb, #fbfcff); }
.dtab { height: 11px; display: flex; align-items: center; gap: 4px; padding: 0 2px 0 8px; background: linear-gradient(#ffe4b8, #f9ba6a); border: 1px solid #c8a070; border-bottom: 0; }
.nav { width: 28px; height: 8px; }
.desk { flex: 1; position: relative; background: #9199ae; border: 1px solid #6d7380; border-right-color: #fff; border-bottom-color: #fff; overflow: hidden; }
.doc { position: absolute; left: 1px; top: 0; width: 362px; height: 289px; padding: 0 5px 5px 4px; display: flex; flex-direction: column; border: 1px solid #38536e; border-radius: 2px; background: linear-gradient(#a6c2e0, #bed3ea 60px, #cfe0f2); }
.doc header { height: 16px; display: flex; align-items: center; gap: 3px; }
.doc header > svg { width: 8px; height: 7px; }
.doc h2 { flex: 1; }
.blue { flex: 1; background: #3d6ea8; padding: 8px 0 0 9px; display: flex; }
.teal { flex: 1; background: #479a98; padding: 0 8px 8px 0; display: flex; }
.canvas { flex: 1; display: grid; place-items: center; background: radial-gradient(circle at 1px 1px, #242424 0, #242424 1px, #000 1px) 0 0 / calc(100% / 40) calc(100% / 30); }
.canvas svg { width: 7px; height: 7px; }
.float { position: absolute; left: 400px; top: 79px; width: 162px; height: 194px; display: flex; flex-direction: column; border: 2px solid #2552a4; background: #f0f0f0; }
.float header { height: 13px; display: flex; align-items: center; gap: 2px; padding: 0 3px 0 2px; background: linear-gradient(#ffce8c, #fca94e); }
.float header h2 { flex: 1; }
.grip { width: 2px; height: 9px; border-left: 1px dotted #765; }
.fbody { flex: 1; display: flex; flex-direction: column; padding: 2px 8px 5px; }
.frow { display: flex; gap: 20px; margin-left: -6px; height: 15px; }
.fchecks { display: flex; height: 11px; padding-left: 3px; }
.fchecks label { width: 60px; display: flex; gap: 1px; }
.fchecks > span { margin-left: -10px; }
.fchecks input { appearance: none; width: 7px; height: 7px; border: 1px solid #789; background: #fff; display: grid; place-items: center; }
.fchecks input::after { content: "✓"; font: bold 6px/6px "DejaVu Sans", sans-serif; color: #234; }
.list { flex: 1; background: #fff; border: 1px solid #8c96a4; display: flex; flex-direction: column; justify-content: space-between; }
.list table { width: 100%; border-collapse: collapse; table-layout: fixed; }
.list th { font-weight: 400; text-align: left; height: 13px; padding: 0 0 0 3px; border-bottom: 1px solid #dde2e8; }
.list th:nth-child(1) { width: 63px; }
.list th:nth-child(2) { width: 52px; }
.scroll { height: 9px; background: #ececec; display: flex; justify-content: space-between; padding: 0 3px; }
.track { flex: 1; padding-left: 5px; }
.track i { display: block; width: 70px; height: 8px; border: 1px solid #999; border-radius: 1px; background: linear-gradient(#fafafa, #c9c9c9); font: 4px/6px "Liberation Sans", sans-serif; text-align: center; }

.right { display: flex; align-items: flex-start; padding: 1px 0 0 1px; gap: 1px; }
.vtabs { width: 10px; display: flex; flex-direction: column; }
.vtabs button { height: 11px; border: 1px solid #c59558; background: #fcd098; display: grid; place-items: center; }
.vtabs svg { width: 8px; height: 8px; }
.vbar { width: 18px; display: flex; flex-direction: column; justify-content: space-between; padding-top: 3px; border-top: 1px dotted #456; border-radius: 2px; background: linear-gradient(90deg, #dce9fd, #c5dafa 50%, #98b9ec); }
.v1 { height: 217px; }
.v2 { height: 142px; margin-left: 1px; }
.vbar button { height: 11px; display: flex; align-items: center; padding-left: 4px; }
.vbar svg { width: 10px; height: 10px; }
.v2 button { padding-left: 1px; gap: 1px; }
.vbar .ar { width: 5px; height: 5px; }
.vbar i { height: 1px; margin: 0 2px; background: #86a6d8; }
.vbar b { height: 5px; background: linear-gradient(90deg, #86a8e4, #2c57ab); border-right: 4px solid #122c68; }

.bottom { height: 26px; }
.browser { height: 12px; margin-left: 2px; padding: 0 2px; display: flex; align-items: center; gap: 2px; background: #fbc88a; border: 1px solid #a97f50; }
.browser svg { width: 9px; height: 9px; }
.bottom .b { color: #7787a8; }
.bottom .bars { gap: 3px; }
.bottom label { display: flex; align-items: center; gap: 2px; padding-left: 2px; }
.bottom input { width: 18px; height: 11px; background: #f0f0f0; margin-right: -2px; }
.spin { width: 8px; height: 11px; background: #f0f0f0; overflow: hidden; line-height: 5px; text-align: center; font-family: "DejaVu Sans", sans-serif; word-break: break-all; }
.status { height: 10px; flex: none; position: relative; background: #f1efed; display: flex; align-items: center; justify-content: flex-end; gap: 5px; padding-right: 108px; font: 7px/8px Roboto, "Noto Sans CJK SC", sans-serif; white-space: nowrap; }
.status .pos { margin-right: 20px; }
.ime { position: absolute; right: 0; bottom: 0; height: 14px; width: 108px; display: flex; align-items: center; justify-content: space-between; padding-right: 3px; background: linear-gradient(90deg, transparent 14px, #fff 14px); }
.ime svg { width: 9px; height: 9px; }
.ime .s { width: 15px; height: 15px; }
.ime span { color: #2780cc; font: bold 9px/12px "Noto Sans CJK SC", sans-serif; }
```
